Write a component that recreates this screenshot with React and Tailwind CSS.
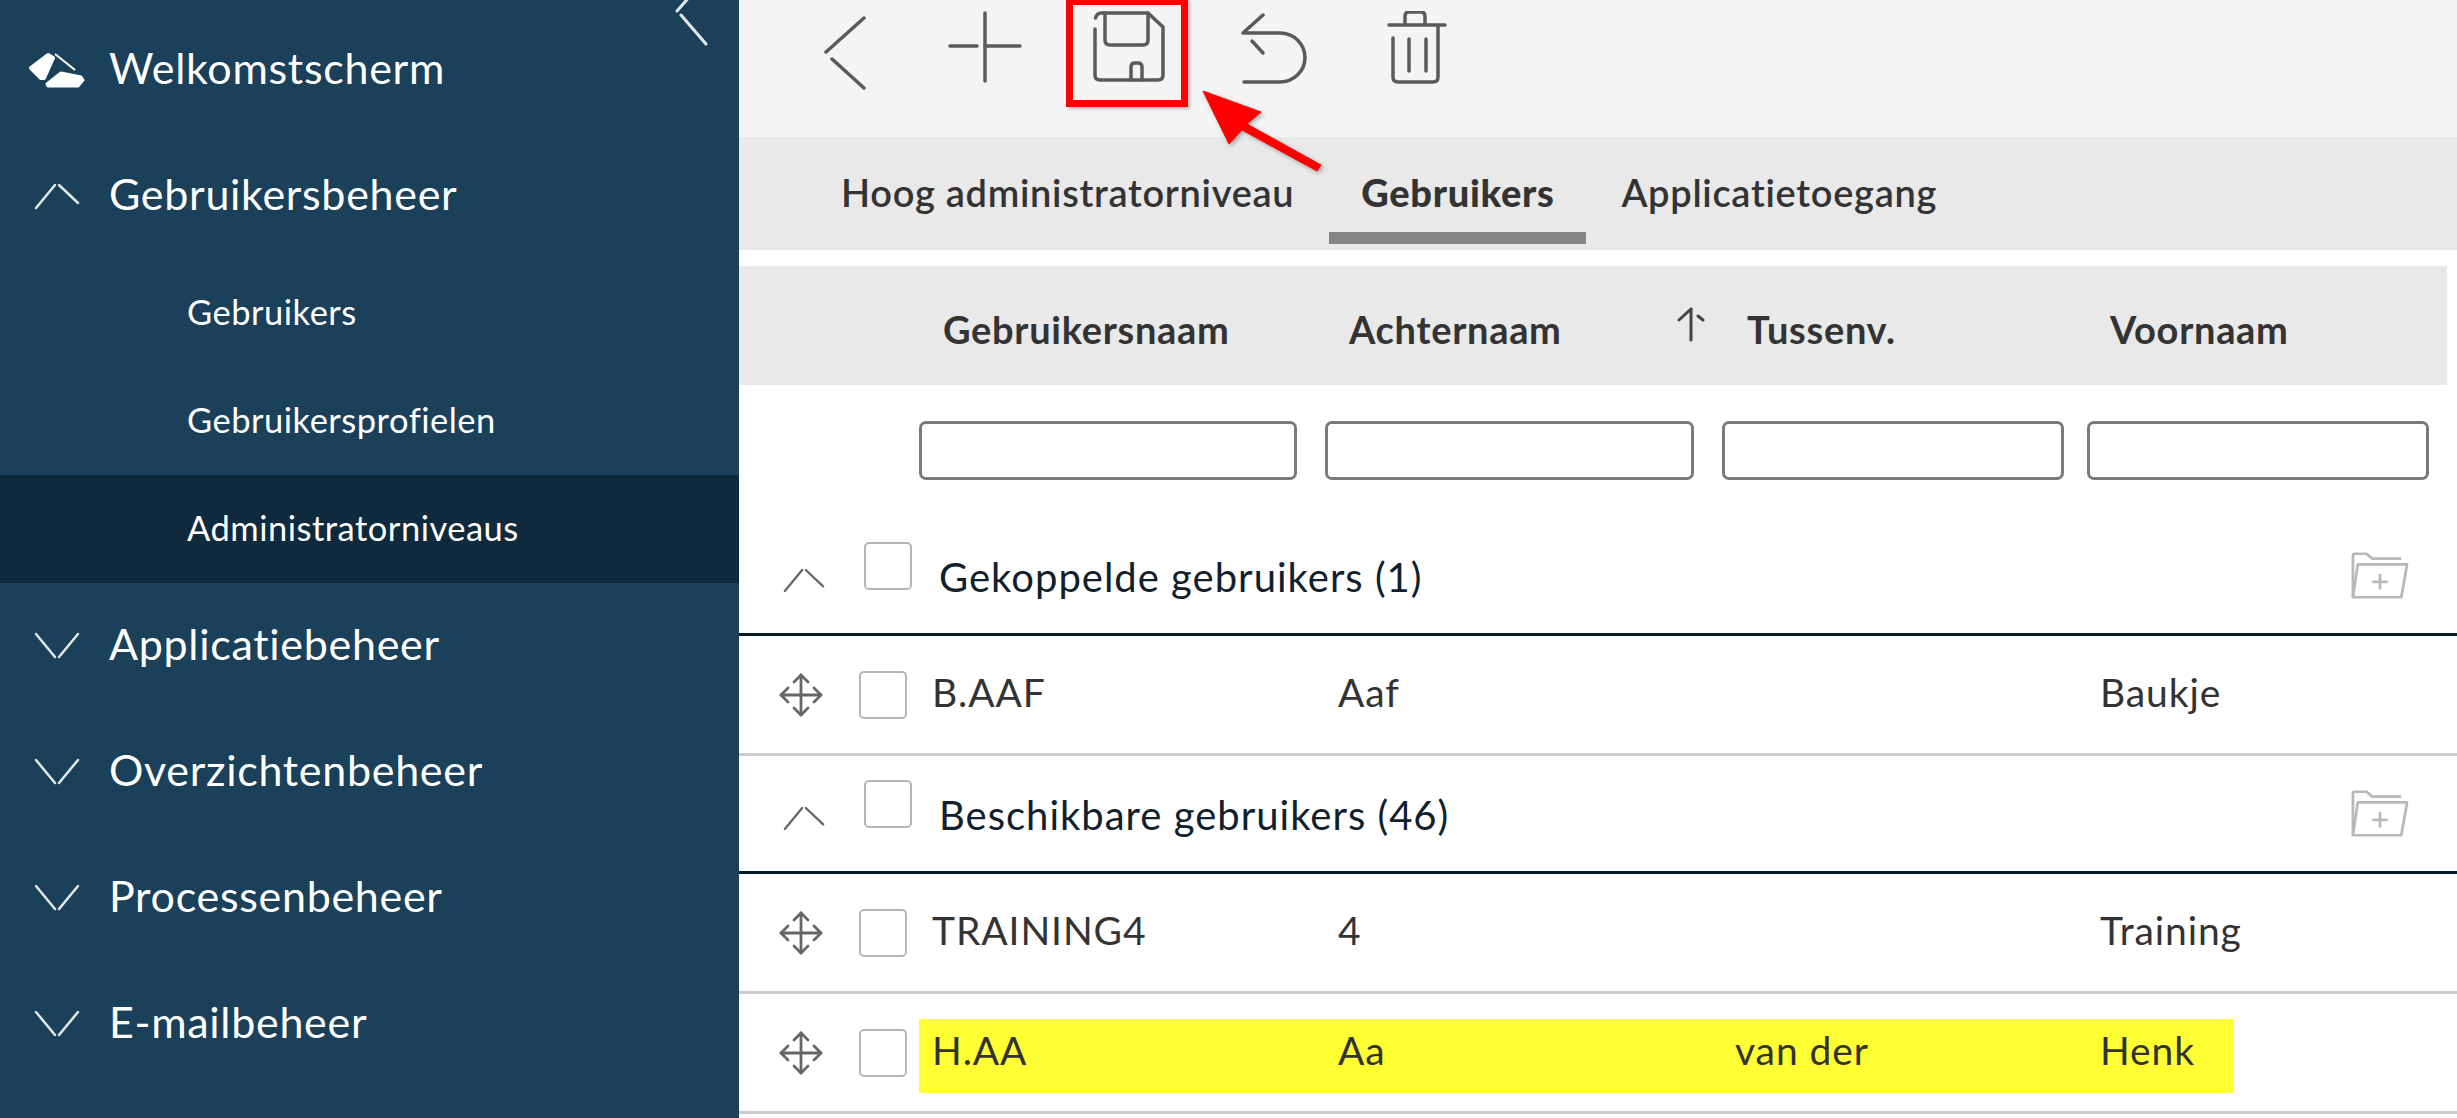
import React from 'react';

const font = "font-['Lato','Noto_Sans',sans-serif]";

const Chevron = ({ up, className = '' }) => (
  <svg viewBox="0 0 46 28" className={className} fill="none" stroke="currentColor" strokeWidth="2.5" strokeLinecap="round">
    {up ? (
      <>
        <path d="M2 26 L21 3" />
        <path d="M25 3 L44 21" />
      </>
    ) : (
      <>
        <path d="M2 2 L21 25" />
        <path d="M25 25 L44 2" />
      </>
    )}
  </svg>
);

const LogoIcon = () => (
  <svg viewBox="0 0 62 40" className="w-[62px] h-[40px]" fill="#fff" stroke="#fff" strokeLinejoin="round">
    <path d="M5 18 L22 5 L27 8 L18 28 L15 28 Z" strokeWidth="4" />
    <path d="M29 4 L49 20" strokeWidth="2" fill="none" />
    <path d="M21 34 L35 23 L55 27 L57 30 L52 36 L22 36 Z" strokeWidth="3" />
  </svg>
);

const MoveIcon = () => (
  <svg viewBox="0 0 46 46" className="w-[46px] h-[46px] text-[#666]" fill="none" stroke="currentColor" strokeWidth="2.8" strokeLinecap="round" strokeLinejoin="round">
    <path d="M23 3 V43 M3 23 H43" />
    <path d="M16 10 L23 3 L30 10 M16 36 L23 43 L30 36 M10 16 L3 23 L10 30 M36 16 L43 23 L36 30" />
  </svg>
);

const FolderPlus = () => (
  <svg viewBox="0 0 60 48" className="w-[58px] h-[48px] text-[#b8b8b8]" fill="none" stroke="currentColor" strokeWidth="2.8" strokeLinejoin="round">
    <path d="M2 46 V3 Q2 1 4 1 H16 L22 6 H52" />
    <path d="M2 46 L7 12 H58 L52 46 Z" />
    <path d="M30 22 V38 M22 30 H38" />
  </svg>
);

const Checkbox = ({ className = '' }) => (
  <div className={`w-[48px] h-[48px] shrink-0 rounded-[5px] border-2 border-[#b5b5b5] bg-white ${className}`} />
);

const NavItem = ({ label, icon }) => (
  <div className="h-[126px] flex items-center text-white">
    <div className="w-[109px] flex justify-center pl-[4px]">{icon}</div>
    <span className="text-[43px] tracking-[0.7px] pb-[3px]">{label}</span>
  </div>
);

const SubItem = ({ label, active }) => (
  <div className={`h-[108px] pl-[187px] flex items-center text-white text-[34.5px] tracking-[0.5px] pb-[3px] ${active ? 'bg-[#0e2a3c]' : ''}`}>
    {label}
  </div>
);

const Sidebar = () => {
  const chevronDown = <Chevron className="w-[46px] h-[28px] text-[#e4e8ea]" />;
  return (
    <aside className="relative w-[739px] shrink-0 bg-[#1b405a] pt-[7px]">
      <svg viewBox="0 0 34 70" className="absolute left-[674px] top-[-24px] w-[34px] h-[70px]" fill="none" stroke="#e6e9eb" strokeWidth="3" strokeLinecap="round">
        <path d="M32 2 L3 35" />
        <path d="M7 39 L32 68" />
      </svg>
      <NavItem label="Welkomstscherm" icon={<LogoIcon />} />
      <NavItem label="Gebruikersbeheer" icon={<Chevron up className="w-[46px] h-[28px] text-[#e4e8ea]" />} />
      <SubItem label="Gebruikers" />
      <SubItem label="Gebruikersprofielen" />
      <SubItem label="Administratorniveaus" active />
      <NavItem label="Applicatiebeheer" icon={chevronDown} />
      <NavItem label="Overzichtenbeheer" icon={chevronDown} />
      <NavItem label="Processenbeheer" icon={chevronDown} />
      <NavItem label="E-mailbeheer" icon={chevronDown} />
    </aside>
  );
};

const Toolbar = () => (
  <div className="relative h-[137px] shrink-0 bg-[#f4f4f4] pl-[84px] flex items-start pt-[11px] text-[#5a5a5a]">
    <svg viewBox="0 0 44 74" className="w-[44px] h-[74px] mt-[5px]" fill="none" stroke="currentColor" strokeWidth="3.5" strokeLinecap="round">
      <path d="M41 2 L3 36" />
      <path d="M9 43 L41 72" />
    </svg>
    <svg viewBox="0 0 74 72" className="w-[74px] h-[72px] ml-[81px]" fill="none" stroke="currentColor" strokeWidth="3.5" strokeLinecap="round">
      <path d="M37 2 V70" />
      <path d="M2 35 H29 M37 35 H72" />
    </svg>
    <svg viewBox="0 0 76 72" className="w-[76px] h-[72px] ml-[70px]" fill="none" stroke="currentColor" strokeWidth="3.5" strokeLinecap="round" strokeLinejoin="round">
      <path d="M3 18 V64 Q3 69 8 69 H66 Q71 69 71 64 V16 L56 2 H9 Q5 2 3.5 7" />
      <path d="M13 2 V29 Q13 34 18 34 H51 Q56 34 56 29 V2" />
      <path d="M39 69 V56 Q39 52 43 52 H46 Q50 52 50 56 V69" />
    </svg>
    <svg viewBox="0 0 68 72" className="w-[68px] h-[72px] ml-[73px] mt-[2px]" fill="none" stroke="currentColor" strokeWidth="3.5" strokeLinecap="round" strokeLinejoin="round">
      <path d="M22 2 L2 20" />
      <path d="M11 28 L22 40" />
      <path d="M4 20 H39 A25 24.5 0 0 1 39 69 H3" />
    </svg>
    <svg viewBox="0 0 60 73" className="w-[60px] h-[73px] ml-[78px]" fill="none" stroke="currentColor" strokeWidth="3.5" strokeLinecap="round" strokeLinejoin="round">
      <path d="M2 14 H58" />
      <path d="M18 13 V5 Q18 1 22 1 H34 Q38 1 38 5 V13" />
      <path d="M6 27 V66 Q6 71 11 71 H46 Q51 71 51 66 V15" />
      <path d="M22 28 V60 M39 28 V60" />
    </svg>
    <div className="absolute left-[327px] top-[-2px] w-[122px] h-[109px] border-[7px] border-[#ff0000] shadow-[2px_2px_3px_rgba(0,0,0,0.25)]" />
  </div>
);

const Tabs = () => (
  <div className="relative h-[113px] shrink-0 bg-[#e9e9e9] flex items-start pl-[102px] pt-[33px] text-[38px] tracking-[0.7px] font-semibold text-[#333] leading-[44px]">
    <span>Hoog administratorniveau</span>
    <div className="ml-[35px] w-[257px] flex flex-col items-center">
      <span className="font-black">Gebruikers</span>
      <div className="mt-[18px] w-full h-[12px] bg-[#858585]" />
    </div>
    <span className="ml-[35px]">Applicatietoegang</span>
  </div>
);

const HeaderRow = () => (
  <div className="mt-[16px] mr-[10px] h-[119px] pt-[8px] bg-[#e9e9e9] grid grid-cols-[204px_406px_342px_364px_1fr] items-center text-[38px] tracking-[0.7px] font-bold text-[#333]">
    <span className="col-start-2">Gebruikersnaam</span>
    <span className="relative">
      Achternaam
      <svg viewBox="0 0 30 36" className="absolute left-[327px] top-[6px] w-[30px] h-[36px]" fill="none" stroke="#444" strokeWidth="3" strokeLinecap="round">
        <path d="M15 2 V33" />
        <path d="M3 13 L15 2 M22 9 L27 13" />
      </svg>
    </span>
    <span className="pl-[56px]">Tussenv.</span>
    <span className="pl-[55px]">Voornaam</span>
  </div>
);

const FilterRow = () => (
  <div className="h-[133px] pt-[36px] pl-[180px] pr-[28px] flex">
    <div className="w-[378px] h-[59px] rounded-[7px] border-[3px] border-[#7a7a7a]" />
    <div className="ml-[28px] w-[369px] h-[59px] rounded-[7px] border-[3px] border-[#7a7a7a]" />
    <div className="ml-[28px] w-[342px] h-[59px] rounded-[7px] border-[3px] border-[#7a7a7a]" />
    <div className="ml-[23px] w-[342px] h-[59px] rounded-[7px] border-[3px] border-[#7a7a7a]" />
  </div>
);

const GroupRow = ({ label }) => (
  <div className="relative h-[118px] border-b-[3px] border-[#071c28] flex pl-[44px] text-[#10202c]">
    <Chevron up className="w-[42px] h-[26px] mt-[49px] text-[#666]" />
    <Checkbox className="ml-[39px] mt-[24px]" />
    <span className="ml-[27px] mt-[37px] text-[40px] tracking-[1px] leading-[44px]">{label}</span>
    <div className="ml-auto mr-[48px] mt-[34px]"><FolderPlus /></div>
  </div>
);

const DataRow = ({ name, last, mid, first, highlight }) => (
  <div className="h-[120px] shrink-0 border-b-[3px] border-[#cccccc] flex items-center pl-[39px] text-[39px] tracking-[0.9px] text-[#333]">
    <MoveIcon />
    <Checkbox className="ml-[35px]" />
    <div className={`ml-[12px] w-[1314px] h-[74px] mt-[6px] pb-[10px] pl-[13px] grid grid-cols-[406px_397px_365px_1fr] items-center whitespace-nowrap ${highlight ? 'bg-[#ffff33]' : ''}`}>
      <span>{name}</span>
      <span>{last}</span>
      <span>{mid}</span>
      <span>{first}</span>
    </div>
  </div>
);

const Arrow = () => (
  <svg viewBox="0 0 130 86" className="absolute left-[463px] top-[90px] w-[130px] h-[86px] overflow-visible">
    <path d="M1 1 L59 22 L45 34 L119 75 L115 81 L40 40 L27 54 Z" fill="#ff0000" stroke="#ff0000" strokeWidth="1" style={{ filter: 'drop-shadow(2px 2px 2px rgba(0,0,0,0.3))' }} />
  </svg>
);

const App = () => (
  <div className={`w-[2457px] h-[1118px] overflow-hidden flex bg-white ${font}`}>
    <Sidebar />
    <main className="relative flex-1 min-w-0 flex flex-col">
      <Toolbar />
      <Tabs />
      <HeaderRow />
      <FilterRow />
      <GroupRow label="Gekoppelde gebruikers (1)" />
      <DataRow name="B.AAF" last="Aaf" first="Baukje" />
      <GroupRow label="Beschikbare gebruikers (46)" />
      <DataRow name="TRAINING4" last="4" first="Training" />
      <DataRow name="H.AA" last="Aa" mid="van der" first="Henk" highlight />
      <Arrow />
    </main>
  </div>
);

export default App;
